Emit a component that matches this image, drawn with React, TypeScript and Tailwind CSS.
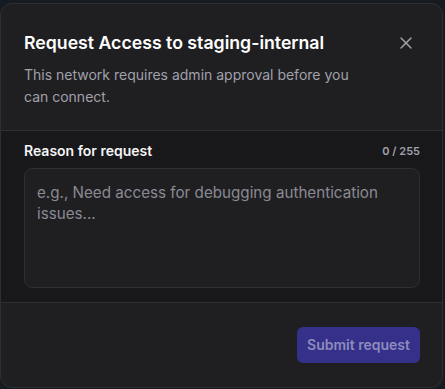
import { X } from "lucide-react";

export default function App() {
  return (
    <div
      className="w-[445px] h-[389px] bg-[#161b22] pt-[3px] pr-[2px] overflow-hidden"
      style={{ fontFamily: "Inter, 'Noto Sans', sans-serif" }}
    >
      <div className="w-[443px] h-[385px] bg-[#1f1f22] border border-[#2f2f33] rounded-xl flex flex-col overflow-hidden">
        <div className="relative pl-[23px] pr-6 pt-[25px] pb-[22px] border-b border-[#2f2f33]">
          <h2 className="text-[17.7px] leading-7 font-semibold text-white">
            Request Access to staging-internal
          </h2>
          <p className="text-sm leading-[22px] text-[#a1a1aa] mt-[7px] max-w-[340px]">
            This network requires admin approval before you can connect.
          </p>
          <button className="absolute right-[26px] top-[29px] text-[#a1a1aa]">
            <X size={20} strokeWidth={1.75} />
          </button>
        </div>

        <div className="bg-[#18181b] pl-[23px] pr-[22px] pt-[10px] pb-[14px] border-b border-[#2f2f33]">
          <div className="flex items-center justify-between">
            <label className="text-sm font-semibold text-[#f4f4f5]">
              Reason for request
            </label>
            <span className="text-[11px] font-semibold text-[#a1a1aa]">0 / 255</span>
          </div>
          <textarea
            className="block mt-[7px] w-full h-[120px] resize-none rounded-lg border border-[#2f2f33] bg-[#1f1f22] px-3 pt-[13px] pb-2 text-[15.2px] leading-[21px] text-white placeholder:text-[#8a8a93] outline-none"
            placeholder="e.g., Need access for debugging authentication issues..."
          />
        </div>

        <div className="flex-1 flex items-center justify-end pr-[22px]">
          <button className="h-9 px-[10px] rounded-md bg-[#35308a] text-sm font-semibold text-[#8e8bbd]">
            Submit request
          </button>
        </div>
      </div>
    </div>
  );
}
